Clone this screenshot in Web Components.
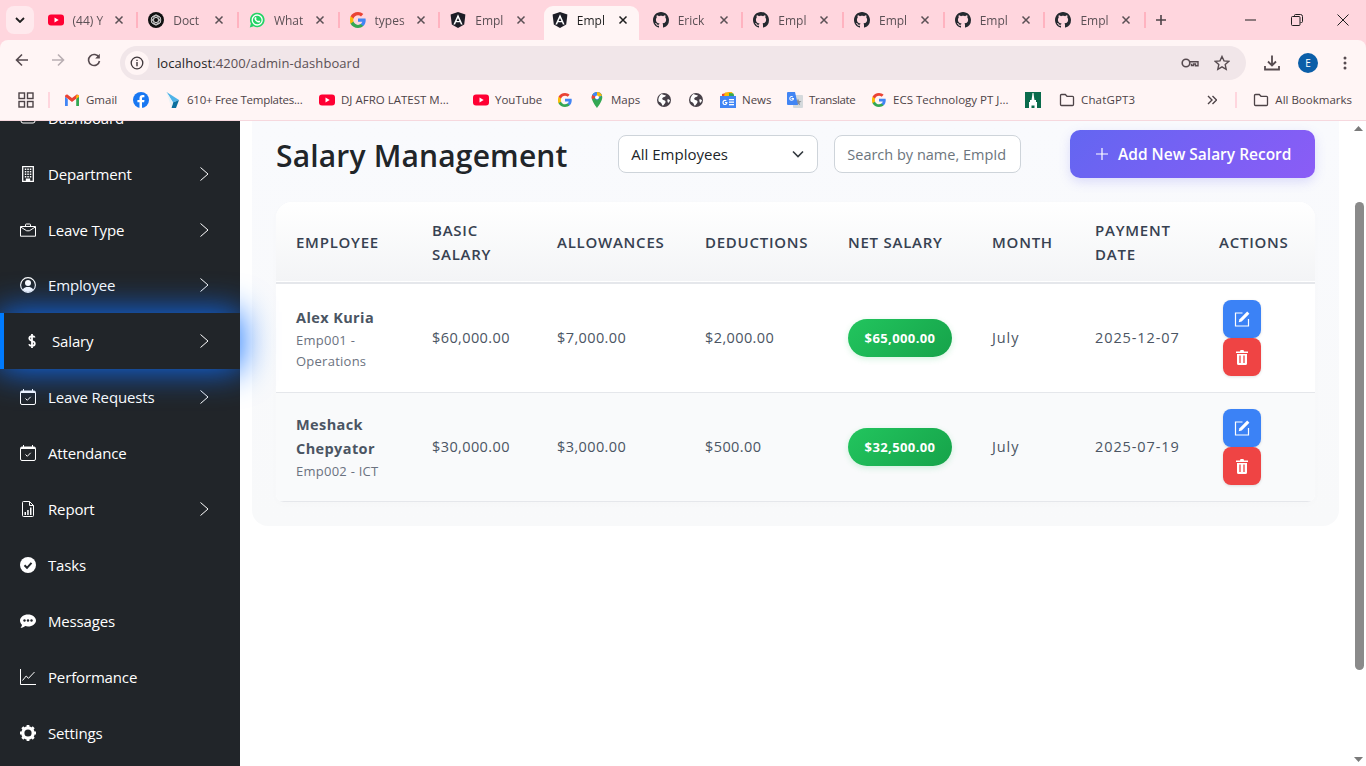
<!DOCTYPE html>
<html lang="en">
<head>
<meta charset="utf-8">
<title>Salary Management</title>
<style>
  html, body { margin: 0; height: 100%; overflow: hidden; }
  body { display: flex; flex-direction: column; height: 766px; font-family: "Open Sans", "Liberation Sans", sans-serif; background: #fff; }
</style>
</head>
<body>
<browser-chrome></browser-chrome>
<page-shell>
  <side-bar slot="side">
    <side-item icon="grid" label="Dashboard"></side-item>
    <side-item icon="building" label="Department" arrow></side-item>
    <side-item icon="briefcase" label="Leave Type" arrow></side-item>
    <side-item icon="person" label="Employee" arrow></side-item>
    <side-item icon="dollar" label="Salary" arrow active></side-item>
    <side-item icon="calendar" label="Leave Requests" arrow></side-item>
    <side-item icon="calendar" label="Attendance"></side-item>
    <side-item icon="report" label="Report" arrow></side-item>
    <side-item icon="check" label="Tasks"></side-item>
    <side-item icon="chat" label="Messages"></side-item>
    <side-item icon="graph" label="Performance"></side-item>
    <side-item icon="gear" label="Settings"></side-item>
  </side-bar>
  <salary-panel slot="main"></salary-panel>
  <fake-scrollbar slot="bar"></fake-scrollbar>
</page-shell>

<script>
const GITHUB = 'M8 0C3.58 0 0 3.58 0 8c0 3.54 2.29 6.53 5.47 7.59.4.07.55-.17.55-.38 0-.19-.01-.82-.01-1.49-2.01.37-2.53-.49-2.69-.94-.09-.23-.48-.94-.82-1.13-.28-.15-.68-.52-.01-.53.63-.01 1.08.58 1.23.82.72 1.21 1.87.87 2.33.66.07-.52.28-.87.51-1.07-1.78-.2-3.64-.89-3.64-3.95 0-.87.31-1.59.82-2.15-.08-.2-.36-1.02.08-2.12 0 0 .67-.21 2.2.82.64-.18 1.32-.27 2-.27.68 0 1.36.09 2 .27 1.53-1.04 2.2-.82 2.2-.82.44 1.1.16 1.92.08 2.12.51.56.82 1.27.82 2.15 0 3.07-1.87 3.75-3.65 3.95.29.25.54.73.54 1.48 0 1.07-.01 1.93-.01 2.2 0 .21.15.46.55.38A8.013 8.013 0 0016 8c0-4.42-3.58-8-8-8z'

const GOOGLE = `
  <path fill="#4285f4" d="M15.7 8.2c0-.6-.1-1.1-.2-1.6H8v3.1h4.3c-.2 1-.8 1.8-1.6 2.4v2h2.6c1.5-1.4 2.4-3.4 2.4-5.9z"/>
  <path fill="#34a853" d="M8 16c2.2 0 4-.7 5.3-1.900l-2.600-2c-.7.5-1.600.8-2.700.8-2.100 0-3.900-1.400-4.500-3.300H.6v2.100C1.900 14.200 4.700 16 8 16z"/>
  <path fill="#fbbc05" d="M3.500 9.600C3.200 8.600 3.200 7.400 3.500 6.400V4.300H.6c-.8 1.700-.8 5.700 0 7.400z"/>
  <path fill="#ea4335" d="M8 3.200c1.200 0 2.200.4 3 1.200l2.300-2.300C11.900.8 10.100 0 8 0 4.700 0 1.900 1.800.6 4.300l2.900 2.100C4.100 4.600 5.900 3.200 8 3.200z"/>`

const FAVICONS = {
  youtube: `<rect y="2.500" width="16" height="11" rx="3" fill="#ff0033"/><path d="M6.500 5.500v5l4.200-2.500z" fill="#fff"/>`,
  chatgpt: `<circle cx="8" cy="8" r="8" fill="#111"/><g fill="none" stroke="#ddd" stroke-width=".8"><circle cx="8" cy="8" r="4.800"/><ellipse cx="8" cy="8" rx="5" ry="2.400" transform="rotate(30 8 8)"/><ellipse cx="8" cy="8" rx="5" ry="2.400" transform="rotate(90 8 8)"/><ellipse cx="8" cy="8" rx="5" ry="2.400" transform="rotate(150 8 8)"/></g>`,
  whatsapp: `<path d="M.8 15.500l1.100-4A7.300 7.300 0 1 1 4.700 14.300z" fill="#25d366"/><circle cx="8.200" cy="8" r="5" fill="none" stroke="#fff" stroke-width="1.300"/><path d="M5.800 5.500c.8-1 1.300-.5 1.700.6.100.5-.5.800-.4 1.100.4.900 1.100 1.500 1.900 1.800.4 0 .7-.7 1.100-.5 1.200.5 1.500 1 .7 1.800-1.800 1.400-6.500-2.300-5-4.800z" fill="#fff"/>`,
  google: GOOGLE,
  gsmall: `<g transform="translate(1 1) scale(.875)">${GOOGLE}</g>`,
  angular: `<path d="M8 0L.6 2.600l1.200 9.800L8 16l6.200-3.600 1.200-9.800z" fill="#1d1d26"/><path d="M8 2.200L3.400 12.500h1.700l.9-2.300h4l.9 2.300h1.700zM8 6l1.400 3H6.600z" fill="#fff"/>`,
  github: `<path d="${GITHUB}" fill="#24292f"/>`,
  gmail: `<path d="M1 14V4.500L8 9l7-4.500V14h-2.800V7.600L8 10.700 3.800 7.600V14z" fill="#fff"/><path d="M1 14h2.800V7.200L1 4.500z" fill="#4285f4"/><path d="M12.200 14H15V4.500l-2.800 2.300z" fill="#34a853"/><path d="M1 4.800C1 2.700 2.800 2 4 3l4 3 4-3c1.200-1 3-.3 3 1.800l-2.800 2L8 10 3.800 6.800z" fill="#ea4335"/><path d="M12.200 3.800v3L15 4.800C15 3 13.400 2.400 12.200 3.800z" fill="#fbbc05"/>`,
  facebook: `<circle cx="8" cy="8" r="8" fill="#1877f2"/><path d="M11.100 10.300l.4-2.300H9V6.500c0-.7.300-1.200 1.300-1.200h1.100v-2c-.5-.1-1.100-.2-1.700-.2-2 0-3.200 1.200-3.200 3.200V8H4.400v2.300h2.100V16h2.500v-5.700z" fill="#fff"/>`,
  arrow: `<path d="M1.500 0L14 8l-6 2.500z" fill="#4fb3e8"/><path d="M8 10.500L14 8l-3 8H6.500z" fill="#0b6f9e"/><path d="M1.500 0l6.500 10.500-1.500 5.500z" fill="#e8f2f6"/>`,
  maps: `<path d="M8 0a5.300 5.300 0 0 0-5.300 5.300C2.700 9.500 8 16 8 16s5.300-6.500 5.300-10.700A5.300 5.300 0 0 0 8 0z" fill="#34a853"/><path d="M3.200 3L8 8.500 13 3.200A5.300 5.300 0 0 0 8 0C6 0 4.200 1.100 3.200 3z" fill="#4285f4"/><path d="M3.200 3A5.300 5.300 0 0 0 2.900 7.200L8 5.300z" fill="#ea4335"/><path d="M8 0C10.500 0 12.400 1.700 13.100 3.500L8 5.300z" fill="#fbbc05"/><circle cx="8" cy="5.300" r="1.900" fill="#fff"/>`,
  globe: `<circle cx="8" cy="8" r="7" fill="#474048"/><path d="M5.500 2C7 3 9.300 2.800 10 3.800 9 5.200 7.500 4.700 6.500 6c-1 1.300.5 2 1.700 2.200 1.700.3 1.700 1.800.8 3-1 1.300-1.500 2.500-2.700 2.300C6 11.500 4.800 10.300 3 9.700 1.500 8 3 3.500 5.500 2z" fill="#fff"/><path d="M11.500 7.300c1.200-.2 2.200.4 2.500 1.300-.4 1-1.200 2-1.900 2.400-.6-1.100-1-2.400-.6-3.700z" fill="#fff"/>`,
  news: `<path d="M2 2l8-2 3 2v4H2z" fill="#ea4335"/><path d="M5 .5l7-.5 2 4H4z" fill="#fbbc05"/><path d="M9 1l4.500.5 1 4H9z" fill="#34a853"/><rect y="4" width="16" height="12" fill="#4285f4"/><rect x="9" y="7" width="5" height="1.300" fill="#fff"/><rect x="9" y="9.500" width="5" height="1.300" fill="#fff"/><rect x="9" y="12" width="5" height="1.300" fill="#fff"/><path d="M7.300 10h-2.300v1.100h1.200c-.2.500-.6.800-1.200.8-.8 0-1.400-.6-1.400-1.500s.6-1.500 1.400-1.500c.3 0 .7.100.9.300l.8-.8c-.5-.4-1.100-.7-1.700-.7-1.400 0-2.600 1.200-2.600 2.700s1.200 2.700 2.600 2.700 2.500-1.100 2.500-2.600z" fill="#fff"/>`,
  translate: `<rect x="6" y="3" width="10" height="13" rx="1" fill="#d5d9dc"/><path d="M11 6.500l1 2.500 2.500.2-2 1.600.7 2.500-2.200-1.400-2.200 1.400.7-2.500-2-1.600L10 9z" fill="#8a8f94"/><path d="M1 0h7l3 13H1a1 1 0 0 1-1-1V1a1 1 0 0 1 1-1z" fill="#4285f4"/><path d="M7 6H4.500v1h1.300c-.2.500-.6.700-1.200.700-.7 0-1.300-.6-1.300-1.300s.6-1.300 1.300-1.300c.3 0 .6.100.8.300l.7-.7c-.4-.4-1-.6-1.500-.6-1.300 0-2.300 1-2.300 2.300s1 2.300 2.300 2.300 2.400-1 2.400-2.300z" fill="#fff"/>`,
  tower: `<rect width="16" height="16" fill="#0a6b4c"/><path d="M7.500 1h1l.5 4 .5 3H11v2h1v6H9.500v-2.500h-3V16H4v-6h1V8h1.500L7 5z" fill="#fff"/>`,
  folder: `<path d="M1.500 3.500a1 1 0 0 1 1-1h3.800l1.700 1.800h5.500a1 1 0 0 1 1 1v7.200a1 1 0 0 1-1 1h-11a1 1 0 0 1-1-1z" fill="none" stroke="#4d4347" stroke-width="1.300"/>`,
}

const ICONS = {
  grid: `<rect x="1" y="3" width="14" height="10" rx="2" fill="none" stroke="currentColor"/>`,
  building: `<path d="M2.700.7h10.600v14.600H2.700z" fill="none" stroke="currentColor" stroke-width="1.300"/><path d="M4.800 2.500h1.500v1.500H4.800zM7.300 2.500h1.500v1.500H7.300zM9.800 2.500h1.500v1.500H9.800zM4.800 5h1.500v1.500H4.800zM7.300 5h1.500v1.500H7.300zM9.800 5h1.500v1.500H9.800zM4.800 7.500h1.500V9H4.800zM7.300 7.500h1.500V9H7.300zM9.800 7.500h1.500V9H9.800zM4.800 10h1.500v1.500H4.800zM7.300 10h1.500v1.500H7.300zM9.800 10h1.500v1.500H9.800zM5.800 12.500h4.400v3H5.800z" fill="currentColor"/>`,
  briefcase: `<path d="M.5 4.500h15v9.700H.5zM5.500 4.500V2.800a.8.8 0 0 1 .8-.8h3.400a.8.8 0 0 1 .8.8v1.700M.7 5l6 3.800h2.600l6-3.800" fill="none" stroke="currentColor"/>`,
  person: `<circle cx="8" cy="8" r="7.400" fill="none" stroke="currentColor" stroke-width="1.100"/><circle cx="8" cy="6" r="3" fill="currentColor"/><path d="M2.800 12.400C4 10.400 5.800 10 8 10s4 .4 5.200 2.400A7 7 0 0 1 8 15a7 7 0 0 1-5.200-2.600z" fill="currentColor"/>`,
  dollar: `<path d="M8 1v14M10.700 4.600C10.400 3.500 9.400 3.100 8 3.100 6.400 3.100 5.300 3.900 5.300 5.300c0 3.200 5.500 2 5.500 5.300 0 1.400-1.200 2.300-2.800 2.300-1.500 0-2.600-.6-3-1.700" fill="none" stroke="currentColor" stroke-width="1.800"/>`,
  calendar: `<rect x=".5" y="2" width="15" height="13.500" rx="1.500" fill="none" stroke="currentColor"/><path d="M.5 4h15V3.500a1.500 1.500 0 0 0-1.500-1.500H2A1.500 1.500 0 0 0 .5 3.500zM3 0h1v2H3zM12 0h1v2h-1z" fill="currentColor"/><path d="M5.500 9.500L7.300 11.300 10.700 7.800" fill="none" stroke="currentColor"/>`,
  report: `<path d="M2.500 1.500a1 1 0 0 1 1-1h6L13.500 4.500V14.500a1 1 0 0 1-1 1h-9a1 1 0 0 1-1-1z" fill="none" stroke="currentColor"/><path d="M9.500.5V4.500H13.500" fill="none" stroke="currentColor"/><path d="M4.500 11h1.500v3H4.500zM7.200 9h1.500v5H7.200zM10 6.500h1.500V14H10z" fill="currentColor"/>`,
  check: `<circle cx="8" cy="8" r="8" fill="currentColor"/><path d="M4.500 8.300L7 10.800 11.500 5.800" fill="none" stroke="#212529" stroke-width="2"/>`,
  chat: `<path d="M8 1.500c4.400 0 8 2.700 8 6s-3.600 6-8 6c-1 0-2-.1-2.900-.4C4 14 2.500 15 .5 15c.8-1 1.500-2.200 1.500-3.200C.8 10.700 0 9.200 0 7.500c0-3.300 3.600-6 8-6z" fill="currentColor"/><circle cx="4.500" cy="7.500" r="1.200" fill="#212529"/><circle cx="8" cy="7.500" r="1.200" fill="#212529"/><circle cx="11.500" cy="7.500" r="1.200" fill="#212529"/>`,
  graph: `<path d="M.5 0v15.500H16" fill="none" stroke="currentColor"/><path d="M2.500 11.500L6.200 7l2.300 2.300L14.500 3" fill="none" stroke="currentColor"/>`,
  gear: `<circle cx="8" cy="8" r="5.200" fill="none" stroke="currentColor" stroke-width="3.200"/><g stroke="currentColor" stroke-width="2.800"><path d="M8 0v3M8 13v3M0 8h3M13 8h3M2.300 2.300l2.100 2.100M11.600 11.600l2.100 2.100M13.700 2.300l-2.100 2.100M4.400 11.600l-2.100 2.100"/></g>`,
}

const svg = (inner, size, box = 16) =>
  `<svg width="${size}" height="${size}" viewBox="0 0 ${box} ${box}" aria-hidden="true">${inner}</svg>`

function define(name, css, render) {
  customElements.define(name, class extends HTMLElement {
    connectedCallback() {
      if (this.shadowRoot) return
      this.attachShadow({ mode: 'open' })
      this.shadowRoot.innerHTML = `<style>${css}</style>${render(this)}`
    }
  })
}

define('browser-tab', `
  :host { display: flex; align-items: center; flex: none; width: 100.7px; height: 34px; box-sizing: border-box; position: relative;
    font-size: 12px; color: #5b5055; padding: 0 0 6px 10px; }
  :host([active]) { width: 95px; margin: 0 3.300px 0 3.400px; padding-left: 7.500px; background: #fff5f5; border-radius: 9px 9px 0 0; color: #1f1f1f; }
  :host([sep])::after { content: ""; position: absolute; right: 0; top: 6px; height: 16px; width: 2px; background: #ffb3c0; }
  .title { margin-left: 9px; width: 34px; flex: none; white-space: nowrap;
    -webkit-mask-image: linear-gradient(90deg, #000 80%, rgba(0,0,0,.35)); mask-image: linear-gradient(90deg, #000 80%, rgba(0,0,0,.35)); }
  .x { margin-left: 7px; width: 10px; height: 10px; flex: none; }
  svg { flex: none; display: block; }
`, el => `
  ${svg(FAVICONS[el.getAttribute('icon')], 16)}
  <span class="title">${el.getAttribute('label')}</span>
  <svg class="x" viewBox="0 0 10 10"><path d="M1.500 1.500l7 7M8.500 1.500l-7 7" stroke="currentColor" stroke-width="1.500"/></svg>
`)

define('book-mark', `
  :host { display: flex; align-items: center; gap: 6px; flex: none; font-size: 11.500px; color: #4d4347; white-space: nowrap; }
  span { padding-bottom: 2px; }
  svg { flex: none; display: block; }
`, el => `${svg(FAVICONS[el.getAttribute('icon')], 16)}${el.getAttribute('label') ? `<span>${el.getAttribute('label')}</span>` : ''}`)

define('browser-chrome', `
  :host { display: block; flex: none; height: 121px; background: #ffd6de; font-family: "Open Sans", "Liberation Sans", sans-serif; }
  .strip { height: 40px; display: flex; align-items: flex-end; padding-left: 6px; position: relative; box-sizing: border-box; }
  .tabs-btn { width: 28px; height: 28px; margin: 0 3.500px 6px 0; border-radius: 8px; background: #ffe9ed; display: grid; place-items: center; flex: none; }
  .tabs { display: flex; align-items: flex-end; height: 34px; }
  .plus { margin: 0 0 14px 9px; flex: none; }
  .win { margin-left: auto; display: flex; align-self: stretch; align-items: center; color: #1f1f1f; }
  .win span { width: 46px; display: grid; place-items: center; }
  .bars { background: #fff5f5; border-radius: 8px 8px 0 0; height: 81px; box-sizing: border-box; border-bottom: 1px solid #f6d8de; }
  .tool { height: 40px; display: flex; align-items: center; padding: 0 0 0 13px; color: #564a4f; }
  .tool .nav { width: 18px; margin-right: 18px; display: grid; place-items: center; flex: none; }
  .omni { width: 1126px; height: 34px; margin: 6px 0 0 -1px; border-radius: 17px; background: #f1e6e9; display: flex; align-items: center; flex: none; padding: 0 12px 0 5px; box-sizing: border-box; align-self: flex-start; }
  .info { width: 24px; height: 24px; border-radius: 50%; background: #fff5f5; display: grid; place-items: center; flex: none; }
  .url { margin-left: 8px; font-size: 13px; letter-spacing: .08px; color: #1f1f1f; }
  .url i { font-style: normal; color: #5b5055; }
  .end { margin-left: auto; display: flex; gap: 15px; align-items: center; padding-right: 4px; }
  .right { display: flex; align-items: center; margin-top: 6px; align-self: flex-start; height: 34px; }
  .avatar { width: 20px; height: 20px; border-radius: 50%; background: #0b5ea8; color: #fff; font-size: 10px; display: grid; place-items: center; margin: 0 25px 0 17px; }
  .marks { height: 40px; display: flex; align-items: center; gap: 16px; padding-left: 18px; position: relative; }
  .sep { width: 2px; height: 16px; background: #ffd6de; flex: none; }
  .rest { margin-left: auto; display: flex; align-items: center; gap: 16px; padding-right: 14px; }
`, () => `
  <div class="strip">
    <span class="tabs-btn"><svg width="10" height="6" viewBox="0 0 10 6"><path d="M1 1l4 4 4-4" fill="none" stroke="#1f1f1f" stroke-width="1.800"/></svg></span>
    <div class="tabs">
      <browser-tab icon="youtube" label="(44) Y" sep></browser-tab>
      <browser-tab icon="chatgpt" label="Doct" sep></browser-tab>
      <browser-tab icon="whatsapp" label="What" sep></browser-tab>
      <browser-tab icon="google" label="types" sep></browser-tab>
      <browser-tab icon="angular" label="Empl"></browser-tab>
      <browser-tab icon="angular" label="Empl" active></browser-tab>
      <browser-tab icon="github" label="Erick" sep></browser-tab>
      <browser-tab icon="github" label="Empl" sep></browser-tab>
      <browser-tab icon="github" label="Empl" sep></browser-tab>
      <browser-tab icon="github" label="Empl" sep></browser-tab>
      <browser-tab icon="github" label="Empl" sep></browser-tab>
    </div>
    <svg class="plus" width="12" height="12" viewBox="0 0 12 12"><path d="M6 1v10M1 6h10" stroke="#4d4347" stroke-width="1.600"/></svg>
    <div class="win">
      <span><svg width="12" height="2" viewBox="0 0 12 2"><path d="M0 1h11" stroke="#1f1f1f"/></svg></span>
      <span><svg width="12" height="12" viewBox="0 0 12 12"><path d="M3.500 2.500V1.500a1 1 0 0 1 1-1h5a2 2 0 0 1 2 2v5a1 1 0 0 1-1 1h-1" fill="none" stroke="#1f1f1f"/><rect x=".5" y="2.500" width="8.500" height="9" rx="1" fill="none" stroke="#1f1f1f"/></svg></span>
      <span><svg width="12" height="12" viewBox="0 0 12 12"><path d="M.5.500l11 11M11.500.500l-11 11" stroke="#1f1f1f"/></svg></span>
    </div>
  </div>
  <div class="bars">
    <div class="tool">
      <span class="nav"><svg width="14" height="14" viewBox="0 0 14 14"><path d="M13 7H2M7 1.500L1.500 7 7 12.500" fill="none" stroke="currentColor" stroke-width="1.600"/></svg></span>
      <span class="nav" style="color:#b9aeb2"><svg width="14" height="14" viewBox="0 0 14 14"><path d="M1 7h11M7 1.500L12.500 7 7 12.500" fill="none" stroke="currentColor" stroke-width="1.600"/></svg></span>
      <span class="nav"><svg width="14" height="14" viewBox="0 0 14 14"><path d="M12 4.500A5.500 5.500 0 1 0 12.500 8" fill="none" stroke="currentColor" stroke-width="1.600"/><path d="M12.800 .8v4.700H8.200z" fill="currentColor"/></svg></span>
      <div class="omni">
        <span class="info"><svg width="14" height="14" viewBox="0 0 14 14"><circle cx="7" cy="7" r="5.800" fill="none" stroke="#3f373b" stroke-width="1.300"/><path d="M7 6v4.200M7 3.700v1.300" stroke="#3f373b" stroke-width="1.400"/></svg></span>
        <span class="url">localhost<i>:4200/admin-dashboard</i></span>
        <span class="end">
          <svg width="18" height="12" viewBox="0 0 18 12"><circle cx="5" cy="6" r="3.800" fill="none" stroke="#564a4f" stroke-width="1.600"/><path d="M8.500 4.800H17v4h-2.500V7h-2v1.500h-2V6.800" fill="none" stroke="#564a4f" stroke-width="1.400"/></svg>
          <svg width="16" height="16" viewBox="0 0 16 16"><path d="M8 1.500l2 4.400 4.700.5-3.500 3.200 1 4.700L8 11.900l-4.200 2.400 1-4.700L1.300 6.400 6 5.900z" fill="none" stroke="#564a4f" stroke-width="1.400"/></svg>
        </span>
      </div>
      <div class="right">
        <svg style="margin-left:17px" width="18" height="18" viewBox="0 0 18 18"><path d="M9 1.500v9.500M5 7.500l4 4 4-4" fill="none" stroke="#564a4f" stroke-width="1.800"/><path d="M2 12v3.500h14V12" fill="none" stroke="#564a4f" stroke-width="1.800"/></svg>
        <span class="avatar">E</span>
        <svg width="4" height="14" viewBox="0 0 4 14"><circle cx="2" cy="2" r="1.500" fill="#564a4f"/><circle cx="2" cy="7" r="1.500" fill="#564a4f"/><circle cx="2" cy="12" r="1.500" fill="#564a4f"/></svg>
      </div>
    </div>
    <div class="marks">
      <svg width="16" height="16" viewBox="0 0 16 16" style="flex:none"><g fill="none" stroke="#4d4347" stroke-width="1.400"><rect x="1" y="1" width="5.500" height="5.500"/><rect x="9.500" y="1" width="5.500" height="5.500"/><rect x="1" y="9.500" width="5.500" height="5.500"/><rect x="9.500" y="9.500" width="5.500" height="5.500"/></g></svg>
      <span class="sep" style="margin-left:-2px;margin-right:-2px"></span>
      <book-mark icon="gmail" label="Gmail" style="width:53px"></book-mark>
      <book-mark icon="facebook" style="width:16px"></book-mark>
      <book-mark icon="arrow" label="610+ Free Templates..." style="width:138px;letter-spacing:-.24px"></book-mark>
      <book-mark icon="youtube" label="DJ AFRO LATEST M..." style="width:138px"></book-mark>
      <book-mark icon="youtube" label="YouTube" style="width:68px"></book-mark>
      <book-mark icon="gsmall" style="width:16px"></book-mark>
      <book-mark icon="maps" label="Maps" style="width:51px"></book-mark>
      <book-mark icon="globe" style="width:16px"></book-mark>
      <book-mark icon="globe" style="width:16px"></book-mark>
      <book-mark icon="news" label="News" style="width:51px"></book-mark>
      <book-mark icon="translate" label="Translate" style="width:68px;letter-spacing:-.4px"></book-mark>
      <book-mark icon="gsmall" label="ECS Technology PT J..." style="width:138px"></book-mark>
      <book-mark icon="tower" style="width:16px"></book-mark>
      <book-mark icon="folder" label="ChatGPT3" style="margin-left:2px;letter-spacing:.15px"></book-mark>
      <span class="rest">
        <svg width="10" height="10" viewBox="0 0 10 10"><path d="M1 1l4 4-4 4M5.500 1l4 4-4 4" fill="none" stroke="#4d4347" stroke-width="1.400"/></svg>
        <span class="sep" style="margin-left:2px"></span>
        <book-mark icon="folder" label="All Bookmarks"></book-mark>
      </span>
    </div>
  </div>
`)

define('page-shell', `
  :host { display: flex; flex: 1; min-height: 0; overflow: hidden; }
  .side { flex: none; width: 240px; position: relative; z-index: 1; background: #212529; }
  .main { flex: 1; min-width: 0; background: #fff; padding: 0 12px; }
  .bar { flex: none; width: 15px; }
`, () => `
  <div class="side"><slot name="side"></slot></div>
  <div class="main"><slot name="main"></slot></div>
  <div class="bar"><slot name="bar"></slot></div>
`)

define('side-bar', `
  :host { display: block; margin-top: -31.150px; color: #fff; }
`, () => `<slot></slot>`)

define('side-item', `
  :host { display: flex; align-items: center; height: 55.900px; box-sizing: border-box; padding: 0 31px 0 20px; font-size: 15px; letter-spacing: -.15px; color: #fff; position: relative; }
  :host([active]) { z-index: 1; border-left: 4px solid #007bff; background: #212529; padding-left: 20px; box-shadow: 0 0 34px 1px #0d6efd; }
  .ico { width: 16px; height: 16px; flex: none; display: block; }
  .label { margin-left: 12px; flex: 1; white-space: nowrap; }
  .arrow { flex: none; display: block; }
`, el => `
  <svg class="ico" viewBox="0 0 16 16">${ICONS[el.getAttribute('icon')]}</svg>
  <span class="label">${el.getAttribute('label')}</span>
  ${el.hasAttribute('arrow') ? `<svg class="arrow" width="9" height="14" viewBox="0 0 9 14"><path d="M.5.500L8 7 .5 13.500" fill="none" stroke="#fff"/></svg>` : ''}
`)

define('money-pill', `
  :host { display: inline-flex; align-items: center; justify-content: center; width: 104px; height: 38px; border-radius: 19px; vertical-align: middle;
    background: linear-gradient(135deg, #22c55e, #16a34a); color: #fff; font-size: 13px; font-weight: 700; letter-spacing: .4px; box-shadow: 0 2px 6px rgba(34,197,94,.2); }
`, () => `<slot></slot>`)

define('icon-button', `
  :host { display: grid; place-items: center; width: 38px; height: 38px; border-radius: 8px; box-shadow: 0 1px 3px rgba(0,0,0,.12); color: #fff; }
  :host([kind="edit"]) { background: #3b82f6; }
  :host([kind="delete"]) { background: #ef4444; }
  svg { display: block; }
`, el => el.getAttribute('kind') === 'edit'
  ? `<svg width="16" height="16" viewBox="0 0 16 16"><path d="M8.500 2H1.500v13h13V8" fill="none" stroke="#fff" stroke-width="1.200"/><path d="M13.200.6l2.200 2.200-7.700 7.700-3 .8.800-3z" fill="#fff"/></svg>`
  : `<svg width="14" height="16" viewBox="0 0 14 16"><path d="M1 2.500h4L5.500 1h3L9 2.500h4V4H1zM2 5h10v9.500a1.500 1.500 0 0 1-1.500 1.500h-7A1.500 1.500 0 0 1 2 14.500z" fill="#fff"/><path d="M5 6.500V14M9 6.500V14" stroke="#ef4444" stroke-width="1.300"/></svg>`)

const ROWS = [
  { name: 'Alex Kuria', sub: 'Emp001 - Operations', basic: '$60,000.00', allow: '$7,000.00', ded: '$2,000.00', net: '$65,000.00', month: 'July', date: '2025-12-07' },
  { name: 'Meshack Chepyator', sub: 'Emp002 - ICT', basic: '$30,000.00', allow: '$3,000.00', ded: '$500.00', net: '$32,500.00', month: 'July', date: '2025-07-19' },
]

define('salary-table', `
  :host { display: block; border-radius: 16px 16px 8px 8px; overflow: hidden; background: #fff; box-shadow: 0 2px 10px rgba(0,0,0,.015); }
  table { width: 100%; border-collapse: collapse; table-layout: fixed; }
  thead tr { height: 81px; background: linear-gradient(180deg, #fff, #f3f4f6); border-bottom: 2px solid #e5e7eb; }
  th { text-align: left; padding: 0 20px 1px; font-size: 15px; line-height: 24px; font-weight: 600; letter-spacing: .75px; color: #374151; text-transform: uppercase; white-space: normal; }
  td { padding: 0 20px; height: 109px; box-sizing: border-box; font-size: 14.500px; color: #4b5563; vertical-align: middle; letter-spacing: .4px; }
  td.wide { letter-spacing: .9px; white-space: nowrap; }
  td.who { padding-top: 2px; }
  tbody tr { border-bottom: 1px solid #e5e7eb; }
  tbody tr:nth-child(even) { background: #f9fafb; }
  .name { font-weight: 700; font-size: 14.500px; line-height: 24px; letter-spacing: .4px; }
  .sub { font-size: 13px; line-height: 21px; color: #6b7280; letter-spacing: .25px; }
  .acts { padding-left: 24px; }
`, () => `
  <table>
    <colgroup><col style="width:136px"><col style="width:125px"><col style="width:148px"><col style="width:143px"><col style="width:144px"><col style="width:103px"><col style="width:124px"><col style="width:116px"></colgroup>
    <thead><tr><th>Employee</th><th>Basic Salary</th><th>Allowances</th><th>Deductions</th><th>Net Salary</th><th>Month</th><th>Payment Date</th><th>Actions</th></tr></thead>
    <tbody>
      ${ROWS.map(r => `<tr>
        <td class="who"><div class="name">${r.name}</div><div class="sub">${r.sub}</div></td>
        <td>${r.basic}</td><td>${r.allow}</td><td>${r.ded}</td>
        <td><money-pill>${r.net}</money-pill></td>
        <td class="wide">${r.month}</td><td class="wide">${r.date}</td>
        <td class="acts"><icon-button kind="edit"></icon-button><icon-button kind="delete"></icon-button></td>
      </tr>`).join('')}
    </tbody>
  </table>
`)

define('salary-panel', `
  :host { display: block; border-radius: 0 0 16px 16px; padding: 9px 24px 24px; background: linear-gradient(180deg, #f9fafd, #f8f9fa); }
  .head { display: flex; align-items: center; justify-content: space-between; height: 48px; margin-bottom: 24px; }
  h1 { margin: 2px 0 0; font-size: 30px; font-weight: 600; letter-spacing: .17px; color: #212529; white-space: nowrap; }
  .filters { display: flex; gap: 16px; margin-left: 2px; }
  .sel { position: relative; }
  select, input { height: 38px; box-sizing: border-box; border: 1px solid #ced4da; border-radius: 8px; background: #fff; font: 14.500px "Open Sans", "Liberation Sans", sans-serif; color: #212529; padding: 0 12px; outline: 0; display: block; }
  select { width: 200px; appearance: none; font-size: 15px; }
  input { width: 187px; }
  input::placeholder { color: #6c757d; opacity: 1; }
  .sel svg { position: absolute; right: 14px; top: 15px; pointer-events: none; }
  .add { display: flex; align-items: center; gap: 9px; width: 245px; height: 48px; box-sizing: border-box; padding-left: 25px; border-radius: 10px; background: linear-gradient(135deg, #6366f1, #8b5cf6); color: #fff; font-size: 15.500px; font-weight: 600; white-space: nowrap; box-shadow: 0 4px 12px rgba(99,102,241,.2); }
`, () => `
  <div class="head">
    <h1>Salary Management</h1>
    <div class="filters">
      <div class="sel">
        <select><option>All Employees</option></select>
        <svg width="12" height="8" viewBox="0 0 12 8"><path d="M1 1.500l5 5 5-5" fill="none" stroke="#343a40" stroke-width="1.600"/></svg>
      </div>
      <input placeholder="Search by name, EmpId">
    </div>
    <div class="add"><svg width="14" height="14" viewBox="0 0 14 14"><path d="M7 1v12M1 7h12" stroke="#fff" stroke-width="1.200"/></svg><span>Add New Salary Record</span></div>
  </div>
  <salary-table></salary-table>
`)

define('fake-scrollbar', `
  :host { display: flex; flex-direction: column; align-items: center; height: 645px; background: #fff; }
  .up, .down { height: 14px; flex: none; display: grid; place-items: center; }
  .gap1 { height: 67px; flex: none; }
  .thumb { width: 9px; height: 468px; border-radius: 4.500px; background: #8a8a8a; flex: none; margin-left: 1px; }
  .gap2 { flex: 1; }
`, () => `
  <div class="up"><svg width="9" height="5" viewBox="0 0 9 5"><path d="M4.500 0L9 5H0z" fill="#7a7a7a"/></svg></div>
  <div class="gap1"></div>
  <div class="thumb"></div>
  <div class="gap2"></div>
  <div class="down"><svg width="9" height="5" viewBox="0 0 9 5"><path d="M4.500 5L9 0H0z" fill="#7a7a7a"/></svg></div>
`)
</script>
</body>
</html>
